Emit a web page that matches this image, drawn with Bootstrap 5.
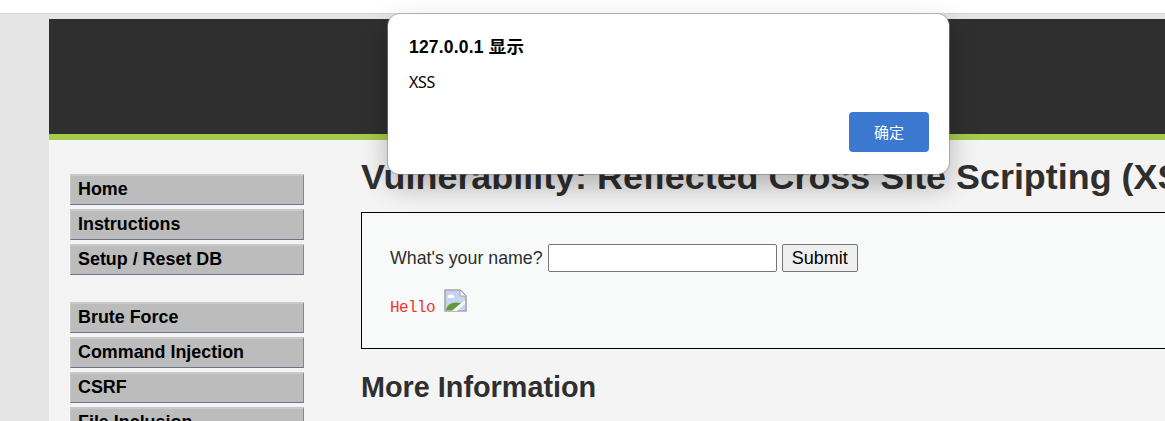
<!DOCTYPE html>
<html lang="en">
<head>
    <meta charset="UTF-8">
    <meta name="viewport" content="width=device-width, initial-scale=1.0">
    <title>Vulnerability: Reflected Cross Site Scripting (XSS)</title>
    <link rel="stylesheet" href="https://cdn.jsdelivr.net/npm/bootstrap@5.3.0/dist/css/bootstrap.min.css">
    <style>
        html, body { height: 100%; overflow: hidden; }
        body { background: #e5e5e5; font-family: "Liberation Sans", Arial, sans-serif; color: #2f2f2f; font-size: 17.8px; }
        .top-strip { height: 14px; background: #fff; border-bottom: 1px solid #d4d4d4; }
        .page-wrap { margin: 5px 0 0 49px; width: 1300px; background: #f4f4f4; }
        .page-head { height: 121px; background: #2f2f2f; border-bottom: 6px solid #a6cb4c; }
        .page-body { padding: 34px 0 0 21px; }
        .side-menu { width: 234px; flex: none; }
        .side-group { margin-bottom: 27px; }
        .side-item { height: 31px; margin-bottom: 4px; padding: 0 0 0 7px; background: #bcbcbc; color: #000; font-weight: 700;
            font-size: 17.9px; line-height: 27px; border-top: 2px solid #c9c9c9; border-right: 1px solid #7f8795; border-bottom: 1px solid #6b7488; border-left: 1px solid #c9c9c9; }
        .main-col { margin-left: 57px; flex: 1; }
        .vuln-title { font-size: 35.9px; font-weight: 700; line-height: 42px; margin: -18px 0 14px; white-space: nowrap; color: #2f2f2f; }
        .vuln-box { height: 137px; background: #f8f9f9; border: 1px solid #000; padding: 31px 0 0 28px; }
        .name-input { width: 229px; height: 28px; border: 1px solid #767676; border-radius: 2px; background: #fff; margin: 0 1px; padding: 0; }
        .name-btn { width: 76px; height: 28px; border: 1px solid #767676; border-radius: 2px; background: #efefef; color: #000; font-size: 18px; line-height: 24px; padding: 0; }
        .hello-line { margin-top: 20px; height: 24px; }
        .hello-text { color: #f0352f; font-family: "Liberation Mono", "DejaVu Sans Mono", monospace; font-size: 16px; letter-spacing: -.6px; line-height: 18px; margin-bottom: -1px; }
        .hello-img { margin: 0 0 4px 9px; }
        .more-title { font-size: 28.8px; font-weight: 700; line-height: 32px; margin: 22px 0 0; color: #2f2f2f; }
        .alert-box { position: absolute; left: 388px; top: 14px; width: 561px; height: 160px; background: #fff; border-radius: 12px;
            box-shadow: 0 12px 28px rgba(0,0,0,.28), 0 0 0 1px rgba(160,160,160,.55); padding: 21px 20px 21px 21px; font-family: "Liberation Sans", "Noto Sans CJK SC", sans-serif; color: #000; }
        .alert-title { font-size: 17.5px; font-weight: 700; line-height: 24px; letter-spacing: .2px; }
        .alert-msg { font-family: "Noto Sans", sans-serif; font-size: 16px; letter-spacing: -.3px; line-height: 20px; margin-top: 13px; }
        .alert-actions { margin-top: 20px; }
        .alert-ok { width: 80px; height: 40px; background: #3b78d0; color: #fff; border: 0; border-radius: 4px; font-size: 15px; padding: 0; font-family: "Noto Sans CJK SC", sans-serif; }
    </style>
</head>
<body>
    <div class="top-strip"></div>
    <div class="page-wrap">
        <div class="page-head"></div>
        <div class="page-body d-flex">
            <div class="side-menu">
                <div class="side-group">
                    <div class="side-item">Home</div>
                    <div class="side-item">Instructions</div>
                    <div class="side-item">Setup / Reset DB</div>
                </div>
                <div class="side-group">
                    <div class="side-item">Brute Force</div>
                    <div class="side-item">Command Injection</div>
                    <div class="side-item">CSRF</div>
                    <div class="side-item">File Inclusion</div>
                </div>
            </div>
            <div class="main-col">
                <h1 class="vuln-title">Vulnerability: Reflected Cross Site Scripting (XSS)</h1>
                <div class="vuln-box">
                    <form class="d-flex align-items-center gap-1">
                        <span>What's your name?</span>
                        <input type="text" class="name-input">
                        <button type="button" class="name-btn">Submit</button>
                    </form>
                    <div class="hello-line d-flex align-items-end">
                        <span class="hello-text">Hello</span>
                        <!-- broken image placeholder -->
                        <svg class="hello-img" width="23" height="23" viewBox="0 0 23 23">
                            <path d="M1 1H16L22 7V22H1Z" fill="#c5d4f3" stroke="#a6a6a6" stroke-width="1.6"/>
                            <path d="M16 1V7H22Z" fill="#fff" stroke="#a6a6a6"/>
                            <path d="M4 7c1-2 5-2 6 0 1 1 0 2-1 2H5C4 9 3 8 4 7Z" fill="#fff"/>
                            <path d="M2 21C3 15 9 12 17 14L9 21Z" fill="#5f9e36"/>
                            <path d="M8 22L21 11V15L13 22Z" fill="#f8f9f9"/>
                        </svg>
                    </div>
                </div>
                <h2 class="more-title">More Information</h2>
            </div>
        </div>
    </div>

    <div class="alert-box">
        <div class="alert-title">127.0.0.1 显示</div>
        <div class="alert-msg">XSS</div>
        <div class="d-flex justify-content-end alert-actions">
            <button type="button" class="alert-ok">确定</button>
        </div>
    </div>

    <script src="https://cdn.jsdelivr.net/npm/bootstrap@5.3.0/dist/js/bootstrap.bundle.min.js"></script>
</body>
</html>
